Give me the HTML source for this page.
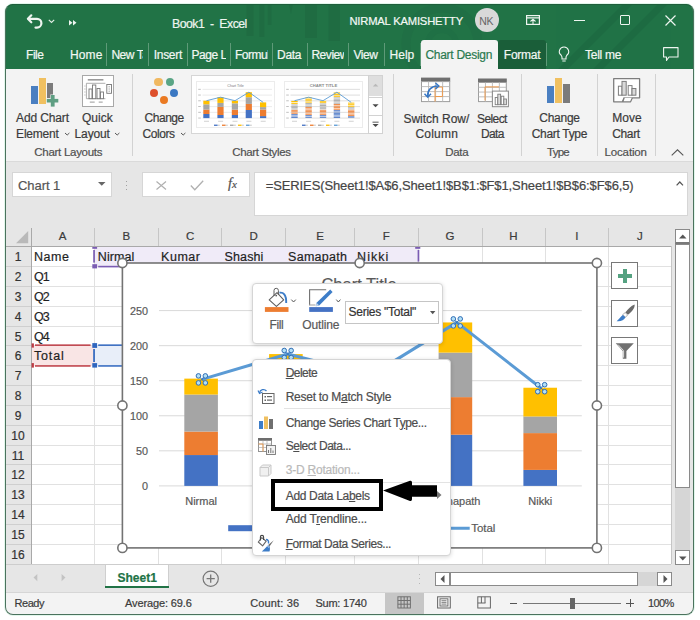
<!DOCTYPE html>
<html><head><meta charset="utf-8">
<style>
*{margin:0;padding:0;box-sizing:border-box}
html,body{width:700px;height:620px;overflow:hidden;background:#fff;font-family:"Liberation Sans",sans-serif}
.a{position:absolute}
.t{position:absolute;white-space:nowrap;line-height:1;-webkit-text-stroke:0.2px currentColor}
svg{position:absolute;overflow:visible}
#win{position:absolute;left:5px;top:4px;width:689px;height:611px;border-radius:8px;overflow:hidden;background:#e6e6e6}
#pg{position:absolute;left:-5px;top:-4px;width:700px;height:620px}
</style></head><body>
<div id="win"><div id="pg">

<div class="a" style="left:0px;top:0px;width:700px;height:69px;background:#217346"></div>
<svg style="left:0;top:0" width="700" height="69"><g fill="#1e6840" opacity="0.6"><rect x="246.5" y="0" width="7" height="36"/><rect x="259.3" y="0" width="5" height="37"/><rect x="267.9" y="0" width="3.5" height="25"/><path d="M287.9 0 H293.6 L291 14Z"/><rect x="305" y="0" width="12" height="38"/><rect x="328.6" y="0" width="11.4" height="41"/></g><circle cx="442" cy="44" r="36" fill="none" stroke="#1f6c43" stroke-width="9" opacity="0.5"/><circle cx="442" cy="44" r="14" fill="none" stroke="#1f6c43" stroke-width="6" opacity="0.4"/><g stroke="#1d6940" stroke-width="7" opacity="0.7"><line x1="560" y1="72" x2="632" y2="0"/><line x1="595" y1="72" x2="667" y2="0"/></g></svg>
<svg style="left:26px;top:13px" width="18" height="17" viewBox="0 0 18 17"><path d="M5.3 2.3 L1.9 5.8 L5.3 9.3" fill="none" stroke="#eef5f0" stroke-width="2.2" stroke-linecap="round" stroke-linejoin="round"/><path d="M2.5 5.8 H11 A4.4 4.4 0 0 1 11 14.6 H9.5" fill="none" stroke="#eef5f0" stroke-width="2.2" stroke-linecap="round"/></svg>
<svg style="left:48px;top:19px" width="8" height="5"><path d="M0.8 0.8 L3.5 3.5 L6.2 0.8" fill="none" stroke="#dcebe1" stroke-width="1.2"/></svg>
<svg style="left:69px;top:20px" width="9" height="6"><path d="M0 0 L3.5 2.7 L0 5.4Z M4 0 L7.5 2.7 L4 5.4Z" fill="#eef5f0"/></svg>
<div class="t" style="left:172.1px;top:18.09px;font-size:12.3px;color:#eef5f0;letter-spacing:-0.537px;">Book1&nbsp; - &nbsp;Excel</div>
<div class="t" style="left:349.4px;top:16.02px;font-size:11.2px;color:#f4f8f5;letter-spacing:-0.167px;">NIRMAL KAMISHETTY</div>
<div class="a" style="left:474.5px;top:7.5px;width:24px;height:24px;border-radius:50%;background:#d9d9d9"></div>
<div class="t" style="left:479.2px;top:16.11px;font-size:10.5px;color:#666;letter-spacing:-0.2px;-webkit-text-stroke:0">NK</div>
<svg style="left:526px;top:15px" width="14" height="10"><rect x="0.6" y="0.6" width="12.8" height="8.8" fill="none" stroke="#eef5f0" stroke-width="1.2"/><line x1="0.6" y1="2.8" x2="13.4" y2="2.8" stroke="#eef5f0" stroke-width="1.2"/><path d="M4.5 6.5 L7 4.2 L9.5 6.5 M7 4.5 V9" fill="none" stroke="#eef5f0" stroke-width="1.1"/></svg>
<div class="a" style="left:574px;top:19.5px;width:11px;height:1.2px;background:#eef5f0"></div>
<div class="a" style="left:619.5px;top:14.8px;width:10.2px;height:10.2px;border:1.2px solid #eef5f0;border-radius:1px"></div>
<svg style="left:665px;top:14.5px" width="11" height="11"><path d="M0.5 0.5 L10.5 10.5 M10.5 0.5 L0.5 10.5" stroke="#eef5f0" stroke-width="1.2"/></svg>
<div class="t" style="left:26px;top:48.94px;font-size:12px;color:#f2f7f3;letter-spacing:-0.445px;">File</div>
<div class="t" style="left:70px;top:48.94px;font-size:12px;color:#f2f7f3;letter-spacing:0.097px;">Home</div>
<div class="t" style="left:153.7px;top:48.94px;font-size:12px;color:#f2f7f3;letter-spacing:-0.282px;">Insert</div>
<div class="t" style="left:277.1px;top:48.94px;font-size:12px;color:#f2f7f3;letter-spacing:-0.349px;">Data</div>
<div class="t" style="left:353.4px;top:48.94px;font-size:12px;color:#f2f7f3;letter-spacing:-0.397px;">View</div>
<div class="t" style="left:389.4px;top:48.94px;font-size:12px;color:#f2f7f3;letter-spacing:0.074px;">Help</div>
<div class="a" style="left:111.4px;top:44px;width:32.0px;height:20px;overflow:hidden">
<div class="t" style="left:0;top:4.94px;font-size:12px;color:#f2f7f3;letter-spacing:-0.45px">New Tab</div></div>
<div class="a" style="left:191.4px;top:44px;width:34.8px;height:20px;overflow:hidden">
<div class="t" style="left:0;top:4.94px;font-size:12px;color:#f2f7f3;letter-spacing:-0.45px">Page Layout</div></div>
<div class="a" style="left:234.9px;top:44px;width:33.0px;height:20px;overflow:hidden">
<div class="t" style="left:0;top:4.94px;font-size:12px;color:#f2f7f3;letter-spacing:-0.45px">Formulas</div></div>
<div class="a" style="left:311.4px;top:44px;width:32.4px;height:20px;overflow:hidden">
<div class="t" style="left:0;top:4.94px;font-size:12px;color:#f2f7f3;letter-spacing:-0.45px">Review</div></div>
<div class="a" style="left:106px;top:43px;width:1px;height:23px;background:#5e9a78"></div>
<div class="a" style="left:148px;top:43px;width:1px;height:23px;background:#5e9a78"></div>
<div class="a" style="left:187px;top:43px;width:1px;height:23px;background:#5e9a78"></div>
<div class="a" style="left:230px;top:43px;width:1px;height:23px;background:#5e9a78"></div>
<div class="a" style="left:272px;top:43px;width:1px;height:23px;background:#5e9a78"></div>
<div class="a" style="left:307px;top:43px;width:1px;height:23px;background:#5e9a78"></div>
<div class="a" style="left:348px;top:43px;width:1px;height:23px;background:#5e9a78"></div>
<div class="a" style="left:384px;top:43px;width:1px;height:23px;background:#5e9a78"></div>
<div class="a" style="left:420px;top:43px;width:1px;height:23px;background:#5e9a78"></div>
<div class="a" style="left:421px;top:40px;width:77px;height:29px;background:#f3f3f3;border-radius:3px 3px 0 0"></div>
<div class="t" style="left:425.4px;top:48.94px;font-size:12px;color:#2a7a4f;letter-spacing:-0.275px;">Chart Design</div>
<div class="a" style="left:498px;top:40px;width:48px;height:29px;background:#1a5e39;border-radius:3px 3px 0 0"></div>
<div class="t" style="left:503.8px;top:48.94px;font-size:12px;color:#f2f7f3;letter-spacing:-0.240px;">Format</div>
<div class="a" style="left:546px;top:43px;width:1px;height:23px;background:#5e9a78"></div>
<svg style="left:558px;top:46px" width="12" height="17"><path d="M6 1 A4.6 4.6 0 0 0 3.2 9.3 C3.8 10 4 10.6 4 11.5 V13 H8 V11.5 C8 10.6 8.2 10 8.8 9.3 A4.6 4.6 0 0 0 6 1Z" fill="none" stroke="#eef5f0" stroke-width="1.1"/><line x1="4.3" y1="15" x2="7.7" y2="15" stroke="#eef5f0" stroke-width="1.1"/></svg>
<div class="t" style="left:585px;top:48.94px;font-size:12px;color:#f2f7f3;letter-spacing:-0.268px;">Tell me</div>
<svg style="left:663px;top:47px" width="16" height="15"><path d="M0.6 0.6 H15 V10 H6 L3.5 13.5 V10 H0.6Z" fill="none" stroke="#eef5f0" stroke-width="1.1" stroke-linejoin="round"/></svg>
<div class="a" style="left:0px;top:68.5px;width:700px;height:92.5px;background:#f3f3f3"></div>
<div class="a" style="left:0px;top:160.5px;width:700px;height:1px;background:#dadada"></div>
<div class="a" style="left:30.7px;top:86px;width:7.2px;height:17.9px;background:#4a7fc1"></div>
<div class="a" style="left:38.6px;top:78.1px;width:7px;height:25.8px;background:#f0c060"></div>
<div class="a" style="left:46.7px;top:83.1px;width:6.8px;height:14.7px;background:#7b7b7b"></div>
<svg style="left:0;top:0" width="700" height="620"><path d="M50.3 94.5 H55.1 V98.4 H58.9 V103 H55.1 V107.1 H50.3 V103 H46.2 V98.4 H50.3Z" fill="#f3f3f3"/><rect x="46.8" y="98.9" width="11.5" height="3.6" fill="#5e9e82"/><rect x="50.8" y="95" width="3.8" height="11.6" fill="#5e9e82"/></svg>
<svg style="left:82.3px;top:75.4px" width="32" height="32" viewBox="0 0 32 32"><rect x="0.5" y="0.5" width="31" height="31" fill="#fff" stroke="#a8a8a8"/><rect x="5.8" y="4" width="15.6" height="1.6" fill="#9a9a9a"/><path d="M4.4 8.3 H23.4 M4.4 8.3 V23.7 H23.4" fill="none" stroke="#9a9a9a" stroke-width="0.8"/><path d="M2.2 11 H3.6 M2.2 14 H3.6 M2.2 17 H3.6 M2.2 20 H3.6" stroke="#aaa" stroke-width="0.7"/><rect x="7" y="14" width="3" height="9.7" fill="#fff" stroke="#777" stroke-width="0.9"/><rect x="10.5" y="10" width="3.3" height="13.7" fill="#fff" stroke="#777" stroke-width="0.9"/><rect x="15" y="13.5" width="3" height="10.2" fill="#fff" stroke="#777" stroke-width="0.9"/><rect x="18.5" y="17" width="3" height="6.7" fill="#fff" stroke="#777" stroke-width="0.9"/><rect x="24.8" y="9.5" width="4.7" height="8.8" fill="#fff" stroke="#777" stroke-width="0.9"/><path d="M27.15 11.3 V12.3 M27.15 13.5 V14.5 M27.15 15.7 V16.7" stroke="#777" stroke-width="0.9"/><rect x="7.8" y="26.6" width="4.9" height="1" fill="#999"/><rect x="16.7" y="26.6" width="4" height="1" fill="#999"/></svg>
<div class="t" style="left:16.1px;top:112.24px;font-size:12px;color:#3b3b3b;letter-spacing:-0.141px;">Add Chart</div>
<div class="t" style="left:16.1px;top:128.04px;font-size:12px;color:#3b3b3b;letter-spacing:-0.220px;">Element</div>
<div class="t" style="left:82px;top:112.24px;font-size:12px;color:#3b3b3b;letter-spacing:0.007px;">Quick</div>
<div class="t" style="left:74.6px;top:128.04px;font-size:12px;color:#3b3b3b;letter-spacing:-0.145px;">Layout</div>
<svg style="left:63.5px;top:131.8px" width="7" height="4"><path d="M1 1 L3.2 3 L5.4 1" fill="none" stroke="#555" stroke-width="1"/></svg>
<svg style="left:114.3px;top:131.8px" width="7" height="4"><path d="M1 1 L3.2 3 L5.4 1" fill="none" stroke="#555" stroke-width="1"/></svg>
<div class="t" style="left:34.3px;top:147.47px;font-size:11.5px;color:#505050;letter-spacing:-0.282px;">Chart Layouts</div>
<div class="a" style="left:131.5px;top:73.5px;width:1px;height:82px;background:#d2d2d2"></div>
<div class="a" style="left:154.4px;top:77.9px;width:8.2px;height:8.2px;border-radius:50%;background:#f0b860"></div>
<div class="a" style="left:166.20000000000002px;top:77.9px;width:8.2px;height:8.2px;border-radius:50%;background:#5aa585"></div>
<div class="a" style="left:150.3px;top:88.80000000000001px;width:8.2px;height:8.2px;border-radius:50%;background:#dd4f2b"></div>
<div class="a" style="left:170.3px;top:88.80000000000001px;width:8.2px;height:8.2px;border-radius:50%;background:#3b78c2"></div>
<div class="a" style="left:160.3px;top:95.80000000000001px;width:8.2px;height:8.2px;border-radius:50%;background:#ea7a22"></div>
<div class="t" style="left:144.6px;top:112.04px;font-size:12px;color:#3b3b3b;letter-spacing:-0.486px;">Change</div>
<div class="t" style="left:142.6px;top:127.94px;font-size:12px;color:#3b3b3b;letter-spacing:-0.455px;">Colors</div>
<svg style="left:179.5px;top:131.8px" width="7" height="4"><path d="M1 1 L3.2 3 L5.4 1" fill="none" stroke="#555" stroke-width="1"/></svg>
<div class="a" style="left:190.5px;top:75.5px;width:1px;height:1px;"></div>
<div class="a" style="left:191.4px;top:75.4px;width:178px;height:58.9px;background:#fff;border:1px solid #d6d6d6"></div>
<svg style="left:196.4px;top:81.3px" width="79" height="47" viewBox="0 0 79 47"><rect x="0.5" y="0.5" width="78" height="46" fill="#fff" stroke="#ececec"/><text x="39.5" y="5.8" font-size="3.6" fill="#777" text-anchor="middle" font-family="Liberation Sans">Chart Title</text><line x1="6.5" y1="37.10" x2="76" y2="37.10" stroke="#e3e3e3" stroke-width="0.7"/><rect x="2.2" y="36.60" width="2.6" height="0.9" fill="#bbb"/><line x1="6.5" y1="31.35" x2="76" y2="31.35" stroke="#e3e3e3" stroke-width="0.7"/><rect x="2.2" y="30.85" width="2.6" height="0.9" fill="#bbb"/><line x1="6.5" y1="25.60" x2="76" y2="25.60" stroke="#e3e3e3" stroke-width="0.7"/><rect x="2.2" y="25.10" width="2.6" height="0.9" fill="#bbb"/><line x1="6.5" y1="19.85" x2="76" y2="19.85" stroke="#e3e3e3" stroke-width="0.7"/><rect x="2.2" y="19.35" width="2.6" height="0.9" fill="#bbb"/><line x1="6.5" y1="14.10" x2="76" y2="14.10" stroke="#e3e3e3" stroke-width="0.7"/><rect x="2.2" y="13.60" width="2.6" height="0.9" fill="#bbb"/><line x1="6.5" y1="8.35" x2="76" y2="8.35" stroke="#e3e3e3" stroke-width="0.7"/><rect x="2.2" y="7.85" width="2.6" height="0.9" fill="#bbb"/><rect x="7.3" y="33.00" width="6.2" height="4.10" fill="#4472c4"/><rect x="7.3" y="28.60" width="6.2" height="4.40" fill="#ed7d31"/><rect x="7.3" y="23.30" width="6.2" height="5.30" fill="#a5a5a5"/><rect x="7.3" y="19.70" width="6.2" height="3.60" fill="#ffc000"/><rect x="21.4" y="34.00" width="6.2" height="3.10" fill="#4472c4"/><rect x="21.4" y="25.90" width="6.2" height="8.10" fill="#ed7d31"/><rect x="21.4" y="21.90" width="6.2" height="4.00" fill="#a5a5a5"/><rect x="21.4" y="16.20" width="6.2" height="5.70" fill="#ffc000"/><rect x="35.8" y="34.00" width="6.2" height="3.10" fill="#4472c4"/><rect x="35.8" y="28.60" width="6.2" height="5.40" fill="#ed7d31"/><rect x="35.8" y="22.30" width="6.2" height="6.30" fill="#a5a5a5"/><rect x="35.8" y="19.70" width="6.2" height="2.60" fill="#ffc000"/><rect x="49.7" y="29.00" width="6.2" height="8.10" fill="#4472c4"/><rect x="49.7" y="22.90" width="6.2" height="6.10" fill="#ed7d31"/><rect x="49.7" y="16.20" width="6.2" height="6.70" fill="#a5a5a5"/><rect x="49.7" y="11.20" width="6.2" height="5.00" fill="#ffc000"/><rect x="64.0" y="35.10" width="6.2" height="2.00" fill="#4472c4"/><rect x="64.0" y="28.50" width="6.2" height="6.60" fill="#ed7d31"/><rect x="64.0" y="26.10" width="6.2" height="2.40" fill="#a5a5a5"/><rect x="64.0" y="21.40" width="6.2" height="4.70" fill="#ffc000"/><polyline points="10.5,19.7 24.6,16.2 39.0,19.7 52.9,11.2 67.2,21.4" fill="none" stroke="#5b9bd5" stroke-width="0.9"/><rect x="8.0" y="39.8" width="5" height="0.8" fill="#c5c5c5"/><rect x="22.1" y="39.8" width="5" height="0.8" fill="#c5c5c5"/><rect x="36.5" y="39.8" width="5" height="0.8" fill="#c5c5c5"/><rect x="50.4" y="39.8" width="5" height="0.8" fill="#c5c5c5"/><rect x="64.7" y="39.8" width="5" height="0.8" fill="#c5c5c5"/><rect x="18.0" y="43.6" width="3.6" height="1.3" fill="#4472c4"/><rect x="22.0" y="43.7" width="1.8" height="1" fill="#c5c5c5"/><rect x="26.0" y="43.6" width="3.6" height="1.3" fill="#ed7d31"/><rect x="30.0" y="43.7" width="1.8" height="1" fill="#c5c5c5"/><rect x="34.0" y="43.6" width="3.6" height="1.3" fill="#a5a5a5"/><rect x="38.0" y="43.7" width="1.8" height="1" fill="#c5c5c5"/><rect x="42.0" y="43.6" width="3.6" height="1.3" fill="#ffc000"/><rect x="46.0" y="43.7" width="1.8" height="1" fill="#c5c5c5"/><rect x="50.0" y="43.6" width="3.6" height="1.3" fill="#5b9bd5"/><rect x="54.0" y="43.7" width="1.8" height="1" fill="#c5c5c5"/></svg>
<svg style="left:283.9px;top:81.3px" width="79" height="47" viewBox="0 0 79 47"><rect x="0.5" y="0.5" width="78" height="46" fill="#fff" stroke="#ececec"/><text x="39.5" y="6.2" font-size="4.2" font-weight="bold" fill="#8a8a8a" text-anchor="middle" font-family="Liberation Sans">CHART TITLE</text><line x1="6.5" y1="37.10" x2="76" y2="37.10" stroke="#cfcfcf" stroke-width="0.7"/><rect x="2.2" y="36.60" width="2.6" height="0.9" fill="#bbb"/><line x1="6.5" y1="31.35" x2="76" y2="31.35" stroke="#cfcfcf" stroke-width="0.7"/><rect x="2.2" y="30.85" width="2.6" height="0.9" fill="#bbb"/><line x1="6.5" y1="25.60" x2="76" y2="25.60" stroke="#cfcfcf" stroke-width="0.7"/><rect x="2.2" y="25.10" width="2.6" height="0.9" fill="#bbb"/><line x1="6.5" y1="19.85" x2="76" y2="19.85" stroke="#cfcfcf" stroke-width="0.7"/><rect x="2.2" y="19.35" width="2.6" height="0.9" fill="#bbb"/><line x1="6.5" y1="14.10" x2="76" y2="14.10" stroke="#cfcfcf" stroke-width="0.7"/><rect x="2.2" y="13.60" width="2.6" height="0.9" fill="#bbb"/><line x1="6.5" y1="8.35" x2="76" y2="8.35" stroke="#cfcfcf" stroke-width="0.7"/><rect x="2.2" y="7.85" width="2.6" height="0.9" fill="#bbb"/><rect x="7.3" y="35.98" width="6.4" height="0.85" fill="#4472c4"/><rect x="7.3" y="34.62" width="6.4" height="0.85" fill="#4472c4"/><rect x="7.3" y="33.25" width="6.4" height="0.85" fill="#4472c4"/><rect x="7.3" y="31.78" width="6.4" height="0.91" fill="#ed7d31"/><rect x="7.3" y="30.32" width="6.4" height="0.91" fill="#ed7d31"/><rect x="7.3" y="28.85" width="6.4" height="0.91" fill="#ed7d31"/><rect x="7.3" y="27.53" width="6.4" height="0.82" fill="#a5a5a5"/><rect x="7.3" y="26.20" width="6.4" height="0.82" fill="#a5a5a5"/><rect x="7.3" y="24.88" width="6.4" height="0.82" fill="#a5a5a5"/><rect x="7.3" y="23.55" width="6.4" height="0.82" fill="#a5a5a5"/><rect x="7.3" y="21.75" width="6.4" height="1.12" fill="#ffc000"/><rect x="7.3" y="19.95" width="6.4" height="1.12" fill="#ffc000"/><rect x="21.4" y="35.80" width="6.4" height="0.96" fill="#4472c4"/><rect x="21.4" y="34.25" width="6.4" height="0.96" fill="#4472c4"/><rect x="21.4" y="32.90" width="6.4" height="0.84" fill="#ed7d31"/><rect x="21.4" y="31.55" width="6.4" height="0.84" fill="#ed7d31"/><rect x="21.4" y="30.20" width="6.4" height="0.84" fill="#ed7d31"/><rect x="21.4" y="28.85" width="6.4" height="0.84" fill="#ed7d31"/><rect x="21.4" y="27.50" width="6.4" height="0.84" fill="#ed7d31"/><rect x="21.4" y="26.15" width="6.4" height="0.84" fill="#ed7d31"/><rect x="21.4" y="24.82" width="6.4" height="0.83" fill="#a5a5a5"/><rect x="21.4" y="23.48" width="6.4" height="0.83" fill="#a5a5a5"/><rect x="21.4" y="22.15" width="6.4" height="0.83" fill="#a5a5a5"/><rect x="21.4" y="20.72" width="6.4" height="0.88" fill="#ffc000"/><rect x="21.4" y="19.30" width="6.4" height="0.88" fill="#ffc000"/><rect x="21.4" y="17.88" width="6.4" height="0.88" fill="#ffc000"/><rect x="21.4" y="16.45" width="6.4" height="0.88" fill="#ffc000"/><rect x="35.8" y="35.80" width="6.4" height="0.96" fill="#4472c4"/><rect x="35.8" y="34.25" width="6.4" height="0.96" fill="#4472c4"/><rect x="35.8" y="32.90" width="6.4" height="0.84" fill="#ed7d31"/><rect x="35.8" y="31.55" width="6.4" height="0.84" fill="#ed7d31"/><rect x="35.8" y="30.20" width="6.4" height="0.84" fill="#ed7d31"/><rect x="35.8" y="28.85" width="6.4" height="0.84" fill="#ed7d31"/><rect x="35.8" y="27.28" width="6.4" height="0.98" fill="#a5a5a5"/><rect x="35.8" y="25.70" width="6.4" height="0.98" fill="#a5a5a5"/><rect x="35.8" y="24.12" width="6.4" height="0.98" fill="#a5a5a5"/><rect x="35.8" y="22.55" width="6.4" height="0.98" fill="#a5a5a5"/><rect x="35.8" y="21.25" width="6.4" height="0.81" fill="#ffc000"/><rect x="35.8" y="19.95" width="6.4" height="0.81" fill="#ffc000"/><rect x="49.7" y="36.00" width="6.4" height="0.84" fill="#4472c4"/><rect x="49.7" y="34.65" width="6.4" height="0.84" fill="#4472c4"/><rect x="49.7" y="33.30" width="6.4" height="0.84" fill="#4472c4"/><rect x="49.7" y="31.95" width="6.4" height="0.84" fill="#4472c4"/><rect x="49.7" y="30.60" width="6.4" height="0.84" fill="#4472c4"/><rect x="49.7" y="29.25" width="6.4" height="0.84" fill="#4472c4"/><rect x="49.7" y="27.73" width="6.4" height="0.95" fill="#ed7d31"/><rect x="49.7" y="26.20" width="6.4" height="0.95" fill="#ed7d31"/><rect x="49.7" y="24.68" width="6.4" height="0.95" fill="#ed7d31"/><rect x="49.7" y="23.15" width="6.4" height="0.95" fill="#ed7d31"/><rect x="49.7" y="21.81" width="6.4" height="0.83" fill="#a5a5a5"/><rect x="49.7" y="20.47" width="6.4" height="0.83" fill="#a5a5a5"/><rect x="49.7" y="19.13" width="6.4" height="0.83" fill="#a5a5a5"/><rect x="49.7" y="17.79" width="6.4" height="0.83" fill="#a5a5a5"/><rect x="49.7" y="16.45" width="6.4" height="0.83" fill="#a5a5a5"/><rect x="49.7" y="14.78" width="6.4" height="1.03" fill="#ffc000"/><rect x="49.7" y="13.12" width="6.4" height="1.03" fill="#ffc000"/><rect x="49.7" y="11.45" width="6.4" height="1.03" fill="#ffc000"/><rect x="64.0" y="35.35" width="6.4" height="1.24" fill="#4472c4"/><rect x="64.0" y="34.03" width="6.4" height="0.82" fill="#ed7d31"/><rect x="64.0" y="32.71" width="6.4" height="0.82" fill="#ed7d31"/><rect x="64.0" y="31.39" width="6.4" height="0.82" fill="#ed7d31"/><rect x="64.0" y="30.07" width="6.4" height="0.82" fill="#ed7d31"/><rect x="64.0" y="28.75" width="6.4" height="0.82" fill="#ed7d31"/><rect x="64.0" y="27.55" width="6.4" height="0.74" fill="#a5a5a5"/><rect x="64.0" y="26.35" width="6.4" height="0.74" fill="#a5a5a5"/><rect x="64.0" y="24.78" width="6.4" height="0.97" fill="#ffc000"/><rect x="64.0" y="23.22" width="6.4" height="0.97" fill="#ffc000"/><rect x="64.0" y="21.65" width="6.4" height="0.97" fill="#ffc000"/><polyline points="10.5,19.7 24.6,16.2 39.0,19.7 52.9,11.2 67.2,21.4" fill="none" stroke="#5b9bd5" stroke-width="0.9"/><rect x="8.0" y="39.8" width="5" height="0.8" fill="#c5c5c5"/><rect x="22.1" y="39.8" width="5" height="0.8" fill="#c5c5c5"/><rect x="36.5" y="39.8" width="5" height="0.8" fill="#c5c5c5"/><rect x="50.4" y="39.8" width="5" height="0.8" fill="#c5c5c5"/><rect x="64.7" y="39.8" width="5" height="0.8" fill="#c5c5c5"/><rect x="18.0" y="43.6" width="3.6" height="1.3" fill="#4472c4"/><rect x="22.0" y="43.7" width="1.8" height="1" fill="#c5c5c5"/><rect x="26.0" y="43.6" width="3.6" height="1.3" fill="#ed7d31"/><rect x="30.0" y="43.7" width="1.8" height="1" fill="#c5c5c5"/><rect x="34.0" y="43.6" width="3.6" height="1.3" fill="#a5a5a5"/><rect x="38.0" y="43.7" width="1.8" height="1" fill="#c5c5c5"/><rect x="42.0" y="43.6" width="3.6" height="1.3" fill="#ffc000"/><rect x="46.0" y="43.7" width="1.8" height="1" fill="#c5c5c5"/><rect x="50.0" y="43.6" width="3.6" height="1.3" fill="#5b9bd5"/><rect x="54.0" y="43.7" width="1.8" height="1" fill="#c5c5c5"/></svg>
<div class="a" style="left:368.4px;top:75.4px;width:14.3px;height:58.9px;background:#fff;border:1px solid #d2d2d2"></div>
<div class="a" style="left:369.4px;top:76.4px;width:12.3px;height:20.1px;background:#dedede"></div>
<div class="a" style="left:368.4px;top:96.5px;width:14.3px;height:1px;background:#d2d2d2"></div>
<div class="a" style="left:368.4px;top:115.1px;width:14.3px;height:1px;background:#d2d2d2"></div>
<svg style="left:0;top:0" width="700" height="620"><path d="M372.8 86.5 L375.55 83.8 L378.3 86.5Z" fill="#b8b8b8"/><path d="M372.5 104.2 L375.55 107.3 L378.6 104.2Z" fill="#4a4a4a"/><rect x="372.5" y="121.7" width="6.1" height="0.9" fill="#4a4a4a"/><path d="M372.5 124 L375.55 127.1 L378.6 124Z" fill="#4a4a4a"/></svg>
<div class="t" style="left:232.2px;top:147.47px;font-size:11.5px;color:#505050;letter-spacing:-0.348px;">Chart Styles</div>
<div class="a" style="left:393.3px;top:73.5px;width:1px;height:82px;background:#d2d2d2"></div>
<svg style="left:0;top:0" width="700" height="620"><rect x="421" y="77.6" width="29.2" height="4" fill="#6f6f6f"/><rect x="421.5" y="81.6" width="28.2" height="20.0" fill="#fff" stroke="#9d9d9d" stroke-width="1"/><line x1="421.5" y1="86.60" x2="449.7" y2="86.60" stroke="#b8b8b8" stroke-width="0.9"/><line x1="421.5" y1="91.60" x2="449.7" y2="91.60" stroke="#b8b8b8" stroke-width="0.9"/><line x1="421.5" y1="96.60" x2="449.7" y2="96.60" stroke="#b8b8b8" stroke-width="0.9"/><line x1="428.55" y1="81.6" x2="428.55" y2="101.6" stroke="#b8b8b8" stroke-width="0.9"/><line x1="435.60" y1="81.6" x2="435.60" y2="101.6" stroke="#b8b8b8" stroke-width="0.9"/><line x1="442.65" y1="81.6" x2="442.65" y2="101.6" stroke="#b8b8b8" stroke-width="0.9"/><path d="M435 87 H442.4 V96.5 H435 Z M435 96.5 V101.6" fill="none" stroke="#ee9a4c" stroke-width="1"/><path d="M427.8 96 C427.5 90 431 86.5 437.5 86" fill="none" stroke="#3877c4" stroke-width="1.7"/><path d="M435.5 83 L438.8 86 L435.5 89" fill="none" stroke="#3877c4" stroke-width="1.5"/><path d="M424.5 93.8 L427.8 97.2 L431 93.8" fill="none" stroke="#3877c4" stroke-width="1.5"/><rect x="478" y="78.5" width="28.8" height="4" fill="#6f6f6f"/><rect x="478.5" y="82.5" width="27.8" height="19.1" fill="#fff" stroke="#9d9d9d" stroke-width="1"/><line x1="478.5" y1="87.28" x2="506.3" y2="87.28" stroke="#b8b8b8" stroke-width="0.9"/><line x1="478.5" y1="92.05" x2="506.3" y2="92.05" stroke="#b8b8b8" stroke-width="0.9"/><line x1="478.5" y1="96.83" x2="506.3" y2="96.83" stroke="#b8b8b8" stroke-width="0.9"/><line x1="485.45" y1="82.5" x2="485.45" y2="101.6" stroke="#b8b8b8" stroke-width="0.9"/><line x1="492.40" y1="82.5" x2="492.40" y2="101.6" stroke="#b8b8b8" stroke-width="0.9"/><line x1="499.35" y1="82.5" x2="499.35" y2="101.6" stroke="#b8b8b8" stroke-width="0.9"/><path d="M499 86.9 H485 V100.5" fill="none" stroke="#ee9a4c" stroke-width="1"/><rect x="492.4" y="91.1" width="16" height="15.6" fill="#fff" stroke="#8a8a8a" stroke-width="1"/><rect x="495.2" y="97.5" width="2.6" height="7.2" fill="#fff" stroke="#7d7d7d" stroke-width="0.9"/><rect x="497.8" y="94.2" width="2.8" height="10.5" fill="#ddd" stroke="#7d7d7d" stroke-width="0.9"/><rect x="501.2" y="96.2" width="2.6" height="8.5" fill="#fff" stroke="#7d7d7d" stroke-width="0.9"/><rect x="503.8" y="99" width="2.6" height="5.7" fill="#ddd" stroke="#7d7d7d" stroke-width="0.9"/></svg>
<div class="t" style="left:403.4px;top:112.64px;font-size:12px;color:#3b3b3b;letter-spacing:-0.012px;">Switch Row/</div>
<div class="t" style="left:415.5px;top:128.14px;font-size:12px;color:#3b3b3b;letter-spacing:0.191px;">Column</div>
<div class="t" style="left:477px;top:112.64px;font-size:12px;color:#3b3b3b;letter-spacing:-0.590px;">Select</div>
<div class="t" style="left:481px;top:128.14px;font-size:12px;color:#3b3b3b;letter-spacing:-0.615px;">Data</div>
<div class="t" style="left:445.3px;top:147.47px;font-size:11.5px;color:#505050;letter-spacing:-0.330px;">Data</div>
<div class="a" style="left:521.2px;top:73.5px;width:1px;height:82px;background:#d2d2d2"></div>
<div class="a" style="left:547.2px;top:86.2px;width:6.8px;height:17.1px;background:#4a7fc1"></div>
<div class="a" style="left:554.5px;top:78.3px;width:7.2px;height:25px;background:#f0c060"></div>
<div class="a" style="left:563px;top:83.5px;width:6.8px;height:19.8px;background:#7b7b7b"></div>
<div class="t" style="left:539.3px;top:112.14px;font-size:12px;color:#3b3b3b;letter-spacing:-0.266px;">Change</div>
<div class="t" style="left:531.7px;top:127.84px;font-size:12px;color:#3b3b3b;letter-spacing:-0.308px;">Chart Type</div>
<div class="t" style="left:547px;top:147.47px;font-size:11.5px;color:#505050;letter-spacing:-0.743px;">Type</div>
<div class="a" style="left:597.2px;top:73.5px;width:1px;height:82px;background:#d2d2d2"></div>
<svg style="left:613px;top:78.2px" width="28" height="25" viewBox="0 0 28 25"><path d="M0.7 0.7 H26.6 V19.8 H11.2 L9.4 23.8 H0.7Z" fill="#fff" stroke="#7d7d7d" stroke-width="1.3" stroke-linejoin="round"/><path d="M11.2 19.8 L9.8 23.8 H17.6 L19.4 19.8" fill="#fff" stroke="#7d7d7d" stroke-width="1.2" stroke-linejoin="round"/><rect x="5.4" y="8.2" width="3.6" height="9" fill="#fff" stroke="#7d7d7d" stroke-width="1"/><rect x="9" y="3.4" width="4.2" height="13.8" fill="#d9d9d9" stroke="#7d7d7d" stroke-width="1"/><rect x="15.2" y="7.6" width="3.8" height="9.6" fill="#fff" stroke="#7d7d7d" stroke-width="1"/><rect x="19" y="10.5" width="3.9" height="6.7" fill="#d9d9d9" stroke="#7d7d7d" stroke-width="1"/></svg>
<div class="t" style="left:612.3px;top:112.14px;font-size:12px;color:#3b3b3b;letter-spacing:-0.014px;">Move</div>
<div class="t" style="left:612.3px;top:127.84px;font-size:12px;color:#3b3b3b;letter-spacing:-0.385px;">Chart</div>
<div class="t" style="left:604.5px;top:147.47px;font-size:11.5px;color:#505050;letter-spacing:-0.139px;">Location</div>
<div class="a" style="left:655px;top:73.5px;width:1px;height:82px;background:#d2d2d2"></div>
<svg style="left:671px;top:148.5px" width="13" height="7"><path d="M0.7 6.3 L6.5 0.8 L12.3 6.3" fill="none" stroke="#555" stroke-width="1.1"/></svg>
<div class="a" style="left:11.5px;top:172.3px;width:100px;height:24.5px;background:#fff;border:1px solid #d6d6d6"></div>
<div class="t" style="left:18px;top:179.00px;font-size:13px;color:#555;letter-spacing:-0.071px;">Chart 1</div>
<svg style="left:97.8px;top:182px" width="8" height="4"><path d="M0 0 H7.5 L3.75 3.8Z" fill="#666"/></svg>
<div class="a" style="left:125.9px;top:181px;width:1.4px;height:1.4px;background:#8a8a8a;border-radius:50%"></div>
<div class="a" style="left:125.9px;top:185px;width:1.4px;height:1.4px;background:#8a8a8a;border-radius:50%"></div>
<div class="a" style="left:125.9px;top:189px;width:1.4px;height:1.4px;background:#8a8a8a;border-radius:50%"></div>
<div class="a" style="left:142.3px;top:172px;width:107.7px;height:25.1px;background:#fff;border:1px solid #d6d6d6"></div>
<svg style="left:155.5px;top:180.5px" width="11" height="9"><path d="M0.5 0.5 L10 8.5 M10 0.5 L0.5 8.5" stroke="#b0b0b0" stroke-width="1.2"/></svg>
<svg style="left:190px;top:179.5px" width="14" height="11"><path d="M0.8 5.5 L4.8 9.8 L13.2 0.8" fill="none" stroke="#b0b0b0" stroke-width="1.3"/></svg>
<div class="t" style="left:228px;top:177.05px;font-size:14px;color:#505050;font-family:Liberation Serif,serif"><i>f</i><i style="font-size:11px">x</i></div>
<div class="a" style="left:254.3px;top:172px;width:433.4px;height:44.3px;background:#fff;border:1px solid #d6d6d6"></div>
<div class="t" style="left:265.7px;top:179.00px;font-size:13px;color:#454545;letter-spacing:-0.109px;">=SERIES(Sheet1!$A$6,Sheet1!$B$1:$F$1,Sheet1!$B$6:$F$6,5)</div>
<svg style="left:675.5px;top:181px" width="8" height="5"><path d="M0.6 4.4 L3.8 1 L7 4.4" fill="none" stroke="#555" stroke-width="1.2"/></svg>
<div class="a" style="left:5px;top:226.3px;width:666.4px;height:19.7px;background:#e6e6e6"></div>
<div class="a" style="left:5px;top:246px;width:26px;height:318px;background:#e6e6e6"></div>
<div class="a" style="left:31px;top:246px;width:640.4px;height:318px;background:#fff"></div>
<svg style="left:0;top:0" width="700" height="620"><line x1="31" y1="266.5" x2="671.4" y2="266.5" stroke="#e1e1e1" stroke-width="1"/><line x1="31" y1="286.5" x2="671.4" y2="286.5" stroke="#e1e1e1" stroke-width="1"/><line x1="31" y1="306.5" x2="671.4" y2="306.5" stroke="#e1e1e1" stroke-width="1"/><line x1="31" y1="326.5" x2="671.4" y2="326.5" stroke="#e1e1e1" stroke-width="1"/><line x1="31" y1="345.5" x2="671.4" y2="345.5" stroke="#e1e1e1" stroke-width="1"/><line x1="31" y1="365.5" x2="671.4" y2="365.5" stroke="#e1e1e1" stroke-width="1"/><line x1="31" y1="385.5" x2="671.4" y2="385.5" stroke="#e1e1e1" stroke-width="1"/><line x1="31" y1="405.5" x2="671.4" y2="405.5" stroke="#e1e1e1" stroke-width="1"/><line x1="31" y1="425.5" x2="671.4" y2="425.5" stroke="#e1e1e1" stroke-width="1"/><line x1="31" y1="445.5" x2="671.4" y2="445.5" stroke="#e1e1e1" stroke-width="1"/><line x1="31" y1="464.5" x2="671.4" y2="464.5" stroke="#e1e1e1" stroke-width="1"/><line x1="31" y1="484.5" x2="671.4" y2="484.5" stroke="#e1e1e1" stroke-width="1"/><line x1="31" y1="504.5" x2="671.4" y2="504.5" stroke="#e1e1e1" stroke-width="1"/><line x1="31" y1="524.5" x2="671.4" y2="524.5" stroke="#e1e1e1" stroke-width="1"/><line x1="31" y1="544.5" x2="671.4" y2="544.5" stroke="#e1e1e1" stroke-width="1"/><line x1="31" y1="564.5" x2="671.4" y2="564.5" stroke="#e1e1e1" stroke-width="1"/><line x1="94.5" y1="246" x2="94.5" y2="564" stroke="#e1e1e1" stroke-width="1"/><line x1="158.5" y1="246" x2="158.5" y2="564" stroke="#e1e1e1" stroke-width="1"/><line x1="221.5" y1="246" x2="221.5" y2="564" stroke="#e1e1e1" stroke-width="1"/><line x1="285.5" y1="246" x2="285.5" y2="564" stroke="#e1e1e1" stroke-width="1"/><line x1="354.5" y1="246" x2="354.5" y2="564" stroke="#e1e1e1" stroke-width="1"/><line x1="418.5" y1="246" x2="418.5" y2="564" stroke="#e1e1e1" stroke-width="1"/><line x1="482.5" y1="246" x2="482.5" y2="564" stroke="#e1e1e1" stroke-width="1"/><line x1="545.5" y1="246" x2="545.5" y2="564" stroke="#e1e1e1" stroke-width="1"/><line x1="608.5" y1="246" x2="608.5" y2="564" stroke="#e1e1e1" stroke-width="1"/><line x1="94.5" y1="228" x2="94.5" y2="246" stroke="#c6c6c6" stroke-width="1"/><line x1="158.5" y1="228" x2="158.5" y2="246" stroke="#c6c6c6" stroke-width="1"/><line x1="221.5" y1="228" x2="221.5" y2="246" stroke="#c6c6c6" stroke-width="1"/><line x1="285.5" y1="228" x2="285.5" y2="246" stroke="#c6c6c6" stroke-width="1"/><line x1="354.5" y1="228" x2="354.5" y2="246" stroke="#c6c6c6" stroke-width="1"/><line x1="418.5" y1="228" x2="418.5" y2="246" stroke="#c6c6c6" stroke-width="1"/><line x1="482.5" y1="228" x2="482.5" y2="246" stroke="#c6c6c6" stroke-width="1"/><line x1="545.5" y1="228" x2="545.5" y2="246" stroke="#c6c6c6" stroke-width="1"/><line x1="608.5" y1="228" x2="608.5" y2="246" stroke="#c6c6c6" stroke-width="1"/><line x1="671.5" y1="228" x2="671.5" y2="246" stroke="#c6c6c6" stroke-width="1"/><line x1="5" y1="246.5" x2="671.4" y2="246.5" stroke="#a9a9a9" stroke-width="1"/><line x1="31.5" y1="228" x2="31.5" y2="564" stroke="#a9a9a9" stroke-width="1"/><line x1="5" y1="266.5" x2="31" y2="266.5" stroke="#cfcfcf" stroke-width="1"/><line x1="5" y1="286.5" x2="31" y2="286.5" stroke="#cfcfcf" stroke-width="1"/><line x1="5" y1="306.5" x2="31" y2="306.5" stroke="#cfcfcf" stroke-width="1"/><line x1="5" y1="326.5" x2="31" y2="326.5" stroke="#cfcfcf" stroke-width="1"/><line x1="5" y1="345.5" x2="31" y2="345.5" stroke="#cfcfcf" stroke-width="1"/><line x1="5" y1="365.5" x2="31" y2="365.5" stroke="#cfcfcf" stroke-width="1"/><line x1="5" y1="385.5" x2="31" y2="385.5" stroke="#cfcfcf" stroke-width="1"/><line x1="5" y1="405.5" x2="31" y2="405.5" stroke="#cfcfcf" stroke-width="1"/><line x1="5" y1="425.5" x2="31" y2="425.5" stroke="#cfcfcf" stroke-width="1"/><line x1="5" y1="445.5" x2="31" y2="445.5" stroke="#cfcfcf" stroke-width="1"/><line x1="5" y1="464.5" x2="31" y2="464.5" stroke="#cfcfcf" stroke-width="1"/><line x1="5" y1="484.5" x2="31" y2="484.5" stroke="#cfcfcf" stroke-width="1"/><line x1="5" y1="504.5" x2="31" y2="504.5" stroke="#cfcfcf" stroke-width="1"/><line x1="5" y1="524.5" x2="31" y2="524.5" stroke="#cfcfcf" stroke-width="1"/><line x1="5" y1="544.5" x2="31" y2="544.5" stroke="#cfcfcf" stroke-width="1"/><line x1="5" y1="564.5" x2="31" y2="564.5" stroke="#cfcfcf" stroke-width="1"/><path d="M28.2 231 V243.2 H16Z" fill="#b9b9b9"/></svg>
<div class="t" style="left:31px;width:63.400000000000006px;text-align:center;top:230.87px;font-size:11.5px;color:#3b3b3b">A</div>
<div class="t" style="left:94.4px;width:64.0px;text-align:center;top:230.87px;font-size:11.5px;color:#3b3b3b">B</div>
<div class="t" style="left:158.4px;width:63.29999999999998px;text-align:center;top:230.87px;font-size:11.5px;color:#3b3b3b">C</div>
<div class="t" style="left:221.7px;width:63.900000000000034px;text-align:center;top:230.87px;font-size:11.5px;color:#3b3b3b">D</div>
<div class="t" style="left:285.6px;width:68.79999999999995px;text-align:center;top:230.87px;font-size:11.5px;color:#3b3b3b">E</div>
<div class="t" style="left:354.4px;width:63.60000000000002px;text-align:center;top:230.87px;font-size:11.5px;color:#3b3b3b">F</div>
<div class="t" style="left:418px;width:64px;text-align:center;top:230.87px;font-size:11.5px;color:#3b3b3b">G</div>
<div class="t" style="left:482px;width:63px;text-align:center;top:230.87px;font-size:11.5px;color:#3b3b3b">H</div>
<div class="t" style="left:545px;width:63.5px;text-align:center;top:230.87px;font-size:11.5px;color:#3b3b3b">I</div>
<div class="t" style="left:608.5px;width:62.89999999999998px;text-align:center;top:230.87px;font-size:11.5px;color:#3b3b3b">J</div>
<div class="t" style="left:5px;width:26px;text-align:center;top:251.44px;font-size:12px;color:#333">1</div>
<div class="t" style="left:5px;width:26px;text-align:center;top:271.44px;font-size:12px;color:#333">2</div>
<div class="t" style="left:5px;width:26px;text-align:center;top:291.44px;font-size:12px;color:#333">3</div>
<div class="t" style="left:5px;width:26px;text-align:center;top:311.44px;font-size:12px;color:#333">4</div>
<div class="t" style="left:5px;width:26px;text-align:center;top:331.44px;font-size:12px;color:#333">5</div>
<div class="t" style="left:5px;width:26px;text-align:center;top:350.44px;font-size:12px;color:#333">6</div>
<div class="t" style="left:5px;width:26px;text-align:center;top:370.44px;font-size:12px;color:#333">7</div>
<div class="t" style="left:5px;width:26px;text-align:center;top:390.44px;font-size:12px;color:#333">8</div>
<div class="t" style="left:5px;width:26px;text-align:center;top:410.44px;font-size:12px;color:#333">9</div>
<div class="t" style="left:5px;width:26px;text-align:center;top:430.44px;font-size:12px;color:#333">10</div>
<div class="t" style="left:5px;width:26px;text-align:center;top:450.44px;font-size:12px;color:#333">11</div>
<div class="t" style="left:5px;width:26px;text-align:center;top:469.44px;font-size:12px;color:#333">12</div>
<div class="t" style="left:5px;width:26px;text-align:center;top:489.44px;font-size:12px;color:#333">13</div>
<div class="t" style="left:5px;width:26px;text-align:center;top:509.44px;font-size:12px;color:#333">14</div>
<div class="t" style="left:5px;width:26px;text-align:center;top:529.44px;font-size:12px;color:#333">15</div>
<div class="t" style="left:5px;width:26px;text-align:center;top:549.44px;font-size:12px;color:#333">16</div>
<div class="a" style="left:94.5px;top:247px;width:323.5px;height:19px;background:#f0ebf8"></div>
<div class="a" style="left:32px;top:346px;width:62.5px;height:19.5px;background:#f9e5e5"></div>
<div class="a" style="left:94.5px;top:346px;width:323.5px;height:19.5px;background:#e8eef9"></div>
<div class="t" style="left:34px;top:251.22px;font-size:12.5px;color:#1f1f1f;letter-spacing:0.553px;">Name</div>
<div class="t" style="left:97.8px;top:251.22px;font-size:12.5px;color:#1f1f1f;letter-spacing:0.079px;">Nirmal</div>
<div class="t" style="left:161.1px;top:251.22px;font-size:12.5px;color:#1f1f1f;letter-spacing:0.521px;">Kumar</div>
<div class="t" style="left:224.6px;top:251.22px;font-size:12.5px;color:#1f1f1f;letter-spacing:0.116px;">Shashi</div>
<div class="t" style="left:288.1px;top:251.22px;font-size:12.5px;color:#1f1f1f;letter-spacing:0.260px;">Samapath</div>
<div class="t" style="left:357.1px;top:251.22px;font-size:12.5px;color:#1f1f1f;letter-spacing:1.029px;">Nikki</div>
<div class="t" style="left:34px;top:271.22px;font-size:12.5px;color:#1f1f1f;letter-spacing:-0.874px;">Q1</div>
<div class="t" style="left:34px;top:291.22px;font-size:12.5px;color:#1f1f1f;letter-spacing:-0.874px;">Q2</div>
<div class="t" style="left:34px;top:311.22px;font-size:12.5px;color:#1f1f1f;letter-spacing:-0.874px;">Q3</div>
<div class="t" style="left:34px;top:331.22px;font-size:12.5px;color:#1f1f1f;letter-spacing:-0.874px;">Q4</div>
<div class="t" style="left:34px;top:350.22px;font-size:12.5px;color:#1f1f1f;letter-spacing:0.824px;">Total</div>
<svg style="left:0;top:0" width="700" height="620"><rect x="92.3" y="247" width="4.8" height="1.8" fill="#7b5cb3"/><rect x="93.2" y="250" width="1.7" height="12.6" fill="#7b5cb3"/><rect x="92.3" y="264.2" width="4.8" height="4.2" fill="#7b5cb3"/><rect x="98.2" y="265.8" width="320" height="1.6" fill="#7b5cb3"/><rect x="415.2" y="247" width="5.1" height="1.8" fill="#7b5cb3"/><rect x="417.6" y="250" width="1.7" height="11.6" fill="#7b5cb3"/><rect x="31.6" y="343.4" width="2.3" height="4.2" fill="#bd3b44"/><rect x="31.6" y="363.1" width="2.3" height="4.5" fill="#bd3b44"/><rect x="35" y="344.4" width="55.6" height="1.5" fill="#bd3b44"/><rect x="35" y="365.2" width="55.6" height="1.5" fill="#bd3b44"/><rect x="92.3" y="343.1" width="4.8" height="4.8" fill="#2f66bf"/><rect x="92.3" y="363.1" width="4.8" height="4.5" fill="#2f66bf"/><rect x="93.2" y="349" width="1.7" height="13" fill="#2f66bf"/><rect x="98.2" y="344.4" width="330" height="1.5" fill="#2f66bf"/><rect x="98.2" y="365.2" width="330" height="1.5" fill="#2f66bf"/></svg>
<div class="a" style="left:671.4px;top:226.3px;width:22.6px;height:338px;background:#e6e6e6"></div>
<div class="a" style="left:675.4px;top:488px;width:14.3px;height:62.5px;background:#d6d6d6"></div>
<div class="a" style="left:675.4px;top:243.8px;width:14.3px;height:244.4px;background:#fff;border:1px solid #8a8a8a"></div>
<div class="a" style="left:675.4px;top:229.1px;width:14.3px;height:15.1px;background:#fff;border:1px solid #8a8a8a;border-bottom:2px solid #7a7a7a"></div>
<svg style="left:678.8px;top:233.8px" width="8" height="5"><path d="M0 4.5 L3.75 0.5 L7.5 4.5Z" fill="#555"/></svg>
<div class="a" style="left:675.4px;top:550.3px;width:14.3px;height:14.7px;background:#fff;border:1px solid #8a8a8a"></div>
<svg style="left:678.8px;top:555.5px" width="8" height="5"><path d="M0 0.5 L3.75 4.5 L7.5 0.5Z" fill="#555"/></svg>
<div class="a" style="left:671.4px;top:246px;width:1px;height:318px;background:#c6c6c6"></div>
<svg style="left:0;top:0" width="700" height="620"><rect x="122.4" y="263.0" width="474.5" height="284.9" fill="#fff" stroke="#737373" stroke-width="1.6"/><line x1="159" y1="485.90" x2="581.8" y2="485.90" stroke="#d9d9d9" stroke-width="1"/><line x1="159" y1="450.84" x2="581.8" y2="450.84" stroke="#d9d9d9" stroke-width="1"/><line x1="159" y1="415.78" x2="581.8" y2="415.78" stroke="#d9d9d9" stroke-width="1"/><line x1="159" y1="380.72" x2="581.8" y2="380.72" stroke="#d9d9d9" stroke-width="1"/><line x1="159" y1="345.66" x2="581.8" y2="345.66" stroke="#d9d9d9" stroke-width="1"/><line x1="159" y1="310.60" x2="581.8" y2="310.60" stroke="#d9d9d9" stroke-width="1"/></svg>
<div class="t" style="left:118px;width:30px;text-align:right;top:480.96px;font-size:10.8px;color:#595959">0</div>
<div class="t" style="left:118px;width:30px;text-align:right;top:445.90px;font-size:10.8px;color:#595959">50</div>
<div class="t" style="left:118px;width:30px;text-align:right;top:410.84px;font-size:10.8px;color:#595959">100</div>
<div class="t" style="left:118px;width:30px;text-align:right;top:375.78px;font-size:10.8px;color:#595959">150</div>
<div class="t" style="left:118px;width:30px;text-align:right;top:340.72px;font-size:10.8px;color:#595959">200</div>
<div class="t" style="left:118px;width:30px;text-align:right;top:305.66px;font-size:10.8px;color:#595959">250</div>
<div class="t" style="left:259px;width:200px;text-align:center;top:276.33px;font-size:16.5px;color:#595959">Chart Title</div>
<svg style="left:0;top:0" width="700" height="620"><rect x="184.30" y="455.05" width="33.6" height="30.85" fill="#4472c4"/><rect x="184.30" y="431.56" width="33.6" height="23.49" fill="#ed7d31"/><rect x="184.30" y="394.53" width="33.6" height="37.02" fill="#a5a5a5"/><rect x="184.30" y="378.62" width="33.6" height="15.92" fill="#ffc000"/><rect x="269.10" y="447.33" width="33.6" height="38.57" fill="#4472c4"/><rect x="269.10" y="419.29" width="33.6" height="28.05" fill="#ed7d31"/><rect x="269.10" y="380.72" width="33.6" height="38.57" fill="#a5a5a5"/><rect x="269.10" y="354.07" width="33.6" height="26.65" fill="#ffc000"/><rect x="353.90" y="457.85" width="33.6" height="28.05" fill="#4472c4"/><rect x="353.90" y="431.21" width="33.6" height="26.65" fill="#ed7d31"/><rect x="353.90" y="399.65" width="33.6" height="31.55" fill="#a5a5a5"/><rect x="353.90" y="375.11" width="33.6" height="24.54" fill="#ffc000"/><rect x="438.60" y="434.71" width="33.6" height="51.19" fill="#4472c4"/><rect x="438.60" y="397.13" width="33.6" height="37.58" fill="#ed7d31"/><rect x="438.60" y="352.60" width="33.6" height="44.53" fill="#a5a5a5"/><rect x="438.60" y="322.45" width="33.6" height="30.15" fill="#ffc000"/><rect x="523.40" y="469.91" width="33.6" height="15.99" fill="#4472c4"/><rect x="523.40" y="433.10" width="33.6" height="36.81" fill="#ed7d31"/><rect x="523.40" y="416.48" width="33.6" height="16.62" fill="#a5a5a5"/><rect x="523.40" y="387.73" width="33.6" height="28.75" fill="#ffc000"/><polyline points="201.9,379.4 287.7,354.0 371.2,375.1 456.8,322.4 541.2,388.2" fill="none" stroke="#5b9bd5" stroke-width="3" stroke-linejoin="round"/><path d="M198.4 375.9 L205.4 382.9 M205.4 375.9 L198.4 382.9" stroke="#2f6db5" stroke-width="0.9"/><circle cx="198.45000000000002" cy="375.9" r="2.3" fill="#b3e0f7" stroke="#2f6db5" stroke-width="1"/><circle cx="198.45000000000002" cy="382.9" r="2.3" fill="#b3e0f7" stroke="#2f6db5" stroke-width="1"/><circle cx="205.35" cy="375.9" r="2.3" fill="#b3e0f7" stroke="#2f6db5" stroke-width="1"/><circle cx="205.35" cy="382.9" r="2.3" fill="#b3e0f7" stroke="#2f6db5" stroke-width="1"/><path d="M284.2 350.5 L291.2 357.5 M291.2 350.5 L284.2 357.5" stroke="#2f6db5" stroke-width="0.9"/><circle cx="284.25" cy="350.5" r="2.3" fill="#b3e0f7" stroke="#2f6db5" stroke-width="1"/><circle cx="284.25" cy="357.5" r="2.3" fill="#b3e0f7" stroke="#2f6db5" stroke-width="1"/><circle cx="291.15" cy="350.5" r="2.3" fill="#b3e0f7" stroke="#2f6db5" stroke-width="1"/><circle cx="291.15" cy="357.5" r="2.3" fill="#b3e0f7" stroke="#2f6db5" stroke-width="1"/><path d="M367.7 371.6 L374.7 378.6 M374.7 371.6 L367.7 378.6" stroke="#2f6db5" stroke-width="0.9"/><circle cx="367.75" cy="371.6" r="2.3" fill="#b3e0f7" stroke="#2f6db5" stroke-width="1"/><circle cx="367.75" cy="378.6" r="2.3" fill="#b3e0f7" stroke="#2f6db5" stroke-width="1"/><circle cx="374.65" cy="371.6" r="2.3" fill="#b3e0f7" stroke="#2f6db5" stroke-width="1"/><circle cx="374.65" cy="378.6" r="2.3" fill="#b3e0f7" stroke="#2f6db5" stroke-width="1"/><path d="M453.3 318.9 L460.3 325.9 M460.3 318.9 L453.3 325.9" stroke="#2f6db5" stroke-width="0.9"/><circle cx="453.35" cy="318.9" r="2.3" fill="#b3e0f7" stroke="#2f6db5" stroke-width="1"/><circle cx="453.35" cy="325.9" r="2.3" fill="#b3e0f7" stroke="#2f6db5" stroke-width="1"/><circle cx="460.25" cy="318.9" r="2.3" fill="#b3e0f7" stroke="#2f6db5" stroke-width="1"/><circle cx="460.25" cy="325.9" r="2.3" fill="#b3e0f7" stroke="#2f6db5" stroke-width="1"/><path d="M537.7 384.7 L544.7 391.7 M544.7 384.7 L537.7 391.7" stroke="#2f6db5" stroke-width="0.9"/><circle cx="537.75" cy="384.7" r="2.3" fill="#b3e0f7" stroke="#2f6db5" stroke-width="1"/><circle cx="537.75" cy="391.7" r="2.3" fill="#b3e0f7" stroke="#2f6db5" stroke-width="1"/><circle cx="544.6500000000001" cy="384.7" r="2.3" fill="#b3e0f7" stroke="#2f6db5" stroke-width="1"/><circle cx="544.6500000000001" cy="391.7" r="2.3" fill="#b3e0f7" stroke="#2f6db5" stroke-width="1"/><rect x="228.2" y="525.2" width="30" height="6" fill="#4472c4"/><line x1="420" y1="528.2" x2="469.7" y2="528.2" stroke="#5b9bd5" stroke-width="3"/><circle cx="122.4" cy="263.0" r="4.6" fill="#fff" stroke="#737373" stroke-width="1.6"/><circle cx="359.65" cy="263.0" r="4.6" fill="#fff" stroke="#737373" stroke-width="1.6"/><circle cx="596.9" cy="263.0" r="4.6" fill="#fff" stroke="#737373" stroke-width="1.6"/><circle cx="122.4" cy="405.5" r="4.6" fill="#fff" stroke="#737373" stroke-width="1.6"/><circle cx="596.9" cy="405.5" r="4.6" fill="#fff" stroke="#737373" stroke-width="1.6"/><circle cx="122.4" cy="547.9" r="4.6" fill="#fff" stroke="#737373" stroke-width="1.6"/><circle cx="359.65" cy="547.9" r="4.6" fill="#fff" stroke="#737373" stroke-width="1.6"/><circle cx="596.9" cy="547.9" r="4.6" fill="#fff" stroke="#737373" stroke-width="1.6"/></svg>
<div class="t" style="left:151.1px;width:100px;text-align:center;top:495.89px;font-size:11px;color:#595959">Nirmal</div>
<div class="t" style="left:235.89999999999998px;width:100px;text-align:center;top:495.89px;font-size:11px;color:#595959">Kumar</div>
<div class="t" style="left:320.7px;width:100px;text-align:center;top:495.89px;font-size:11px;color:#595959">Shashi</div>
<div class="t" style="left:405.4px;width:100px;text-align:center;top:495.89px;font-size:11px;color:#595959">Samapath</div>
<div class="t" style="left:490.20000000000005px;width:100px;text-align:center;top:495.89px;font-size:11px;color:#595959">Nikki</div>
<div class="t" style="left:471.3px;top:522.97px;font-size:11.5px;color:#595959;letter-spacing:-0.073px;">Total</div>
<div class="a" style="left:611px;top:262.2px;width:27.4px;height:27.2px;background:#fff;border:1.4px solid #787878"></div>
<div class="a" style="left:611px;top:299.8px;width:27.4px;height:27.2px;background:#fff;border:1.4px solid #787878"></div>
<div class="a" style="left:611px;top:337.3px;width:27.4px;height:27.2px;background:#fff;border:1.4px solid #787878"></div>
<div class="a" style="left:617.9px;top:274px;width:13.7px;height:3.8px;background:#55a281"></div>
<div class="a" style="left:622.5px;top:269px;width:4.1px;height:13.5px;background:#55a281"></div>
<svg style="left:0;top:0" width="700" height="620"><path d="M634.6 304.4 C635.2 308 631.5 311.8 627.9 314.8 L625.3 312.5 C628 309 631 305.8 634.6 304.4Z" fill="#6b6b6b"/><path d="M625.1 312.6 L627.6 314.9 L625.6 317.2 L622.6 314.8Z" fill="#fff" stroke="#9a9a9a" stroke-width="0.8"/><path d="M622.8 314.9 L625.5 317.3 C624 320.5 620.5 321.8 616.6 321.2 C618.8 319.6 620.3 316.5 622.8 314.9Z" fill="#3d7dc8"/><path d="M615.7 343.3 H633.8 L626.4 351 V358.7 H622.8 V351Z" fill="#707070"/><path d="M618 344.6 L623.6 350.6 V357.6" fill="none" stroke="#e8e8e8" stroke-width="0.9"/></svg>
<div class="a" style="left:252px;top:283px;width:191px;height:61px;background:#fff;border:1px solid #d5d5d5;border-radius:4px;box-shadow:0 1px 4px rgba(0,0,0,0.16)"></div>
<svg style="left:0;top:0" width="700" height="620"><path d="M277 292.6 L283.7 299.8 L276.4 306.4 L269.2 299.8Z" fill="#fff" stroke="#5f5f5f" stroke-width="1.1" stroke-linejoin="round"/><path d="M274 296 V290.5 A2.2 2.2 0 0 1 278.4 290.5 V295" fill="none" stroke="#5f5f5f" stroke-width="1"/><circle cx="276.2" cy="295.6" r="0.9" fill="#5f5f5f"/><path d="M279.5 292.8 C283 292 286.5 294.5 286.2 303" fill="none" stroke="#3d7dc8" stroke-width="1.9"/><rect x="264.9" y="307.1" width="23.6" height="4.8" fill="#ed7d31"/><path d="M291.3 299.6 L293.55 302 L295.8 299.6" fill="none" stroke="#555" stroke-width="1"/><path d="M326.2 289.8 H309.6 V305.3" fill="none" stroke="#6f6f6f" stroke-width="1.1"/><path d="M309.2 305 H315.5" stroke="#a8a8a8" stroke-width="1.1"/><path d="M330.2 289.6 L332.6 292 L319.2 305.4 L315.8 306.2 L316.6 302.8Z" fill="#3d7dc8"/><path d="M316.6 302.8 L319.2 305.4 L315.8 306.2Z" fill="#bcd3ee"/><rect x="309.2" y="307.1" width="23.7" height="4.8" fill="#4472c4"/><path d="M336.3 299.6 L338.35 302 L340.4 299.6" fill="none" stroke="#555" stroke-width="1"/></svg>
<div class="t" style="left:269.4px;top:319.14px;font-size:12px;color:#595959;letter-spacing:-0.343px;">Fill</div>
<div class="t" style="left:302.3px;top:319.14px;font-size:12px;color:#595959;letter-spacing:-0.153px;">Outline</div>
<div class="a" style="left:345.1px;top:301.3px;width:94.3px;height:22.3px;background:#fff;border:1px solid #c5c5c5"></div>
<div class="t" style="left:348.6px;top:305.64px;font-size:12px;color:#333;letter-spacing:-0.270px;">Series "Total"</div>
<svg style="left:430px;top:310.5px" width="6" height="4"><path d="M0 0 H5.4 L2.7 3.2Z" fill="#555"/></svg>
<div class="a" style="left:252px;top:359.3px;width:199px;height:197px;background:#fff;border:1px solid #d5d5d5;border-radius:4px;box-shadow:0 1px 4px rgba(0,0,0,0.16)"></div>
<div class="t" style="left:285.7px;top:366.84px;font-size:12px;color:#4d4d4d;letter-spacing:-0.557px;"><u>D</u>elete</div>
<div class="t" style="left:285.7px;top:391.14px;font-size:12px;color:#4d4d4d;letter-spacing:-0.264px;">Reset to M<u>a</u>tch Style</div>
<div class="t" style="left:285.7px;top:416.84px;font-size:12px;color:#4d4d4d;letter-spacing:-0.376px;">Change Series Chart T<u>y</u>pe...</div>
<div class="t" style="left:285.7px;top:440.34px;font-size:12px;color:#4d4d4d;letter-spacing:-0.487px;">S<u>e</u>lect Data...</div>
<div class="t" style="left:285.7px;top:463.84px;font-size:12px;color:#b9b9b9;letter-spacing:-0.219px;">3-D <u>R</u>otation...</div>
<div class="t" style="left:285.7px;top:489.54px;font-size:12px;color:#4d4d4d;letter-spacing:-0.316px;">Add Data La<u>b</u>els</div>
<div class="t" style="left:285.7px;top:513.34px;font-size:12px;color:#4d4d4d;letter-spacing:-0.176px;">Add T<u>r</u>endline...</div>
<div class="t" style="left:285.7px;top:537.54px;font-size:12px;color:#4d4d4d;letter-spacing:-0.416px;"><u>F</u>ormat Data Series...</div>
<div class="a" style="left:284.3px;top:408px;width:166px;height:1px;background:#e3e3e3"></div>
<div class="a" style="left:284.3px;top:482px;width:166px;height:1px;background:#e3e3e3"></div>
<svg style="left:257px;top:388px" width="18" height="16" viewBox="0 0 18 16"><path d="M2.5 5 A4 4 0 0 1 9.5 3" fill="none" stroke="#3d7dc8" stroke-width="1.3"/><path d="M1 2.5 L2.5 5.5 L5.5 4" fill="none" stroke="#3d7dc8" stroke-width="1.2"/><rect x="5.5" y="5.5" width="11.5" height="10" fill="#fff" stroke="#666" stroke-width="1"/><rect x="7.5" y="8" width="1.5" height="1.5" fill="#666"/><rect x="10" y="8" width="5" height="1.2" fill="#666"/><rect x="7.5" y="11.5" width="1.5" height="1.5" fill="#666"/><rect x="10" y="11.5" width="5" height="1.2" fill="#666"/></svg>
<svg style="left:258.5px;top:416px" width="15" height="13" viewBox="0 0 15 13"><rect x="0" y="5" width="4" height="8" fill="#3d7dc8"/><rect x="5" y="0.5" width="4" height="12.5" fill="#f0c060"/><rect x="10" y="3" width="4" height="10" fill="#6f6f6f"/></svg>
<svg style="left:257.5px;top:437.5px" width="18" height="17" viewBox="0 0 18 17"><rect x="0" y="0" width="14" height="2.5" fill="#6d6d6d"/><rect x="0.5" y="2.5" width="13" height="11" fill="#fff" stroke="#888" stroke-width="0.9"/><path d="M0.5 6 H13.5 M0.5 9.5 H13.5 M5 2.5 V13.5 M9 2.5 V13.5" stroke="#aaa" stroke-width="0.7"/><path d="M0.5 6 H5 V13.5" fill="none" stroke="#ed9a4a" stroke-width="0.9"/><rect x="8.5" y="7.5" width="9" height="9" fill="#f3f3f3" stroke="#777" stroke-width="0.9"/><path d="M10.5 15 V12 M12.8 15 V10 M15 15 V12.5" stroke="#777" stroke-width="1"/></svg>
<svg style="left:259px;top:463.5px" width="13" height="13" viewBox="0 0 13 13"><path d="M1 3.5 L3.5 1 H12 V9.5 L9.5 12 H1Z" fill="#f0f0f0" stroke="#c9c9c9" stroke-width="1"/><path d="M1 3.5 H9.5 V12 M9.5 3.5 L12 1" fill="none" stroke="#c9c9c9" stroke-width="1"/></svg>
<svg style="left:0;top:0" width="700" height="620"><path d="M258.3 542 L261.8 537.6 L266.2 541.2 L262.6 545.8Z" fill="#fff" stroke="#666" stroke-width="1.1" stroke-linejoin="round"/><path d="M260.4 540.6 V537 A1.6 1.6 0 0 1 263.6 537 V540" fill="none" stroke="#444" stroke-width="1.1"/><path d="M266 539.5 C268 539.5 269 541 268.4 543.5" fill="none" stroke="#3d7dc8" stroke-width="1.4"/><path d="M273.8 540.2 L269.6 546.2 L268.2 545 Z" fill="#6b6b6b"/><path d="M268 545.3 L269.8 546.6 C270.2 549.5 269.8 551 269.5 551.6 H261.8 C264 549.8 266 547.5 268 545.3Z" fill="#3d7dc8"/><path d="M267.3 546.2 L269.3 547.6" stroke="#dbe8f6" stroke-width="0.9"/></svg>
<svg style="left:437px;top:491px" width="5" height="8"><path d="M0 0 L4.5 4 L0 8Z" fill="#777"/></svg>
<div class="a" style="left:271px;top:479px;width:112px;height:31.5px;border:4.6px solid #000"></div>
<svg style="left:380px;top:478px" width="62" height="26" viewBox="0 0 62 26"><path d="M3 12.6 L30 2.8 Q32 2.3 32 4.5 V7.2 H57 V18.7 H32 V21.3 Q32 23.5 30 23 Z" fill="#000"/></svg>
<div class="a" style="left:5px;top:564.3px;width:666.4px;height:27.7px;background:#e6e6e6"></div>
<div class="a" style="left:5px;top:564.3px;width:666.4px;height:1px;background:#cdcdcd"></div>
<svg style="left:32.5px;top:574.2px" width="36" height="8"><path d="M4.3 0 L0.5 3.6 L4.3 7.2Z M28.6 0 L32.5 3.6 L28.6 7.2Z" fill="#c3c3c3"/></svg>
<div class="a" style="left:105.4px;top:564.5px;width:63.8px;height:23.5px;background:#fff;border-left:1px solid #cfcfcf;border-right:1px solid #cfcfcf"></div>
<div class="a" style="left:105.4px;top:586.2px;width:63.8px;height:2px;background:#217346"></div>
<div class="t" style="left:117.4px;top:572.24px;font-size:12px;color:#217346;letter-spacing:0.030px;font-weight:bold">Sheet1</div>
<svg style="left:201.6px;top:569.7px" width="18" height="18"><circle cx="8.7" cy="8.7" r="7.6" fill="none" stroke="#777" stroke-width="1.2"/><path d="M8.7 4.6 V12.8 M4.6 8.7 H12.8" stroke="#777" stroke-width="1.3"/></svg>
<div class="a" style="left:418.8px;top:573.5px;width:1.3px;height:1.3px;background:#a8a8a8;border-radius:50%"></div>
<div class="a" style="left:418.8px;top:578px;width:1.3px;height:1.3px;background:#a8a8a8;border-radius:50%"></div>
<div class="a" style="left:418.8px;top:582.5px;width:1.3px;height:1.3px;background:#a8a8a8;border-radius:50%"></div>
<div class="a" style="left:435.4px;top:571.5px;width:14.4px;height:14.8px;background:#fff;border:1px solid #8a8a8a"></div>
<svg style="left:439.5px;top:575px" width="5" height="8"><path d="M4.5 0 L0.5 4 L4.5 8Z" fill="#555"/></svg>
<div class="a" style="left:449.8px;top:571.5px;width:188.5px;height:14.8px;background:#fff;border:1px solid #8a8a8a"></div>
<div class="a" style="left:638.3px;top:571.5px;width:19px;height:14.8px;background:#d6d6d6"></div>
<div class="a" style="left:657.3px;top:571.5px;width:14.4px;height:14.8px;background:#fff;border:1px solid #8a8a8a"></div>
<svg style="left:662.5px;top:575px" width="5" height="8"><path d="M0.5 0 L4.5 4 L0.5 8Z" fill="#555"/></svg>
<div class="a" style="left:5px;top:592px;width:690px;height:24px;background:#f3f3f3"></div>
<div class="a" style="left:5px;top:592px;width:690px;height:1px;background:#d6d6d6"></div>
<div class="t" style="left:14.6px;top:598.09px;font-size:11px;color:#3b3b3b;letter-spacing:-0.499px;">Ready</div>
<div class="t" style="left:125px;top:598.09px;font-size:11px;color:#3b3b3b;letter-spacing:-0.124px;">Average: 69.6</div>
<div class="t" style="left:250.3px;top:598.09px;font-size:11px;color:#3b3b3b;letter-spacing:0.125px;">Count: 36</div>
<div class="t" style="left:315.4px;top:598.09px;font-size:11px;color:#3b3b3b;letter-spacing:-0.225px;">Sum: 1740</div>
<div class="a" style="left:385px;top:593px;width:39.1px;height:21px;background:#c6c6c6"></div>
<svg style="left:0;top:0" width="700" height="620"><rect x="397.9" y="596.8" width="12.5" height="11.2" fill="none" stroke="#707070" stroke-width="1"/><path d="M401 596.8 V608 M404.15 596.8 V608 M407.3 596.8 V608 M397.9 600.5 H410.4 M397.9 604.2 H410.4" stroke="#707070" stroke-width="1"/><rect x="437.6" y="596.8" width="12.7" height="11.2" fill="none" stroke="#666" stroke-width="1"/><rect x="440" y="598.8" width="7.9" height="7.2" fill="none" stroke="#666" stroke-width="0.9"/><path d="M441.5 600.7 H446.4 M441.5 602.4 H446.4 M441.5 604.1 H446.4" stroke="#666" stroke-width="0.8"/><rect x="477.8" y="596.8" width="12.6" height="11.2" fill="none" stroke="#666" stroke-width="1"/><path d="M481.4 596.8 V603 M485 596.8 V603 M477.8 603 H485.5" fill="none" stroke="#666" stroke-width="1"/></svg>
<div class="a" style="left:509.7px;top:602.8px;width:7px;height:1.2px;background:#555"></div>
<div class="a" style="left:522.7px;top:603px;width:98.4px;height:1px;background:#777"></div>
<div class="a" style="left:570.4px;top:598.3px;width:4.4px;height:10.3px;background:#666"></div>
<div class="a" style="left:626.3px;top:602.8px;width:8px;height:1.2px;background:#555"></div>
<div class="a" style="left:629.7px;top:599.3px;width:1.2px;height:8px;background:#555"></div>
<div class="t" style="left:647.9px;top:598.09px;font-size:11px;color:#3b3b3b;letter-spacing:-0.578px;">100%</div>
</div></div>
<div class="a" style="left:4px;top:3px;width:691px;height:613px;border-radius:9px;border:1px solid #e2f7ec;pointer-events:none"></div>
<div class="a" style="left:5px;top:4px;width:689px;height:611px;border-radius:8px;border:1px solid #4b725d;border-top-color:#1f5f3c;pointer-events:none"></div>
</body></html>
